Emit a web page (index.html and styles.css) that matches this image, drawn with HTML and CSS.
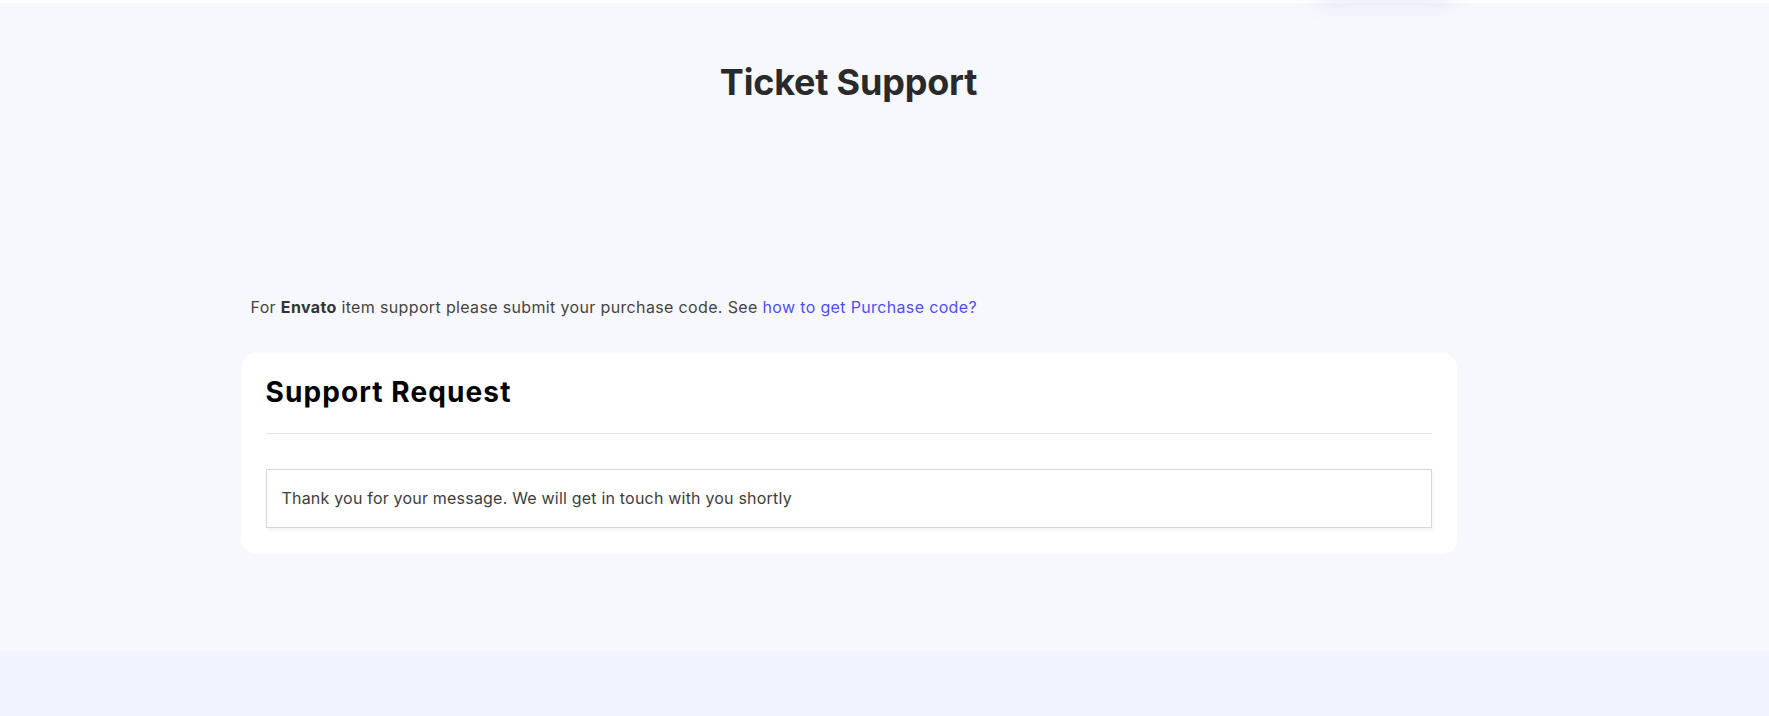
FILE: index.html
```html
<!DOCTYPE html>
<html lang="en">
<head>
    <meta charset="UTF-8">
    <meta name="viewport" content="width=device-width, initial-scale=1.0">
    <title>Ticket Support</title>
    <link rel="stylesheet" href="styles.css">
</head>
<body>
    <div class="topbar">
        <div class="menu-shadow"></div>
    </div>
    <section class="support-section">
        <div class="container">
            <h1 class="page-title">Ticket Support</h1>
            <p class="intro">For <strong>Envato</strong> item support please submit your purchase code. See <a href="#">how to get Purchase code?</a></p>
            <div class="card">
                <h2 class="card-title">Support Request</h2>
                <div class="message">Thank you for your message. We will get in touch with you shortly</div>
            </div>
        </div>
    </section>
    <footer class="footer"></footer>
</body>
</html>
```

FILE: styles.css
```css
body {
    margin: 0;
    font-family: Inter, "Liberation Sans", sans-serif;
    color: #444;
    background-color: #f1f3fe;
}
.topbar {
    position: relative;
    height: 3px;
    background-color: #fff;
}
.menu-shadow {
    position: absolute;
    top: -60px;
    left: 1318px;
    width: 136px;
    height: 60px;
    border-radius: 8px;
    box-shadow: 0 4px 22px rgba(90, 80, 190, 0.12);
}
.support-section {
    height: 648px;
    background-color: #f7f8fd;
    padding-right: 72px;
    box-sizing: border-box;
}
.container {
    max-width: 1216px;
    margin: 0 auto;
    padding-top: 58px;
}
.page-title {
    margin: 0;
    text-align: center;
    font-size: 36px;
    line-height: 1.2;
    font-weight: 700;
    color: #2a2a2a;
    letter-spacing: -0.2px;
}
.intro {
    margin: 191px 0 0 10px;
    font-size: 16px;
    line-height: 24px;
    color: #444;
    letter-spacing: 0.35px;
}
.intro strong {
    color: #333;
}
.intro a {
    color: #4f4ff5;
    text-decoration: none;
}
.card {
    margin-top: 34px;
    background-color: #fff;
    border-radius: 15px;
    padding: 23px 25px 26px;
}
.card-title {
    margin: 0;
    padding-bottom: 23px;
    border-bottom: 1px solid #e4e4e4;
    font-size: 28px;
    line-height: 1.2;
    font-weight: 700;
    color: #000;
    letter-spacing: 1.1px;
}
.message {
    margin-top: 35px;
    border: 1px solid #d3d6db;
    padding: 16px 15px 17px;
    font-size: 16px;
    line-height: 24px;
    color: #3d3d3d;
    letter-spacing: 0.2px;
    box-shadow: 1px 2px 4px rgba(0, 0, 0, 0.06);
}
.footer {
    height: 65px;
}
```
